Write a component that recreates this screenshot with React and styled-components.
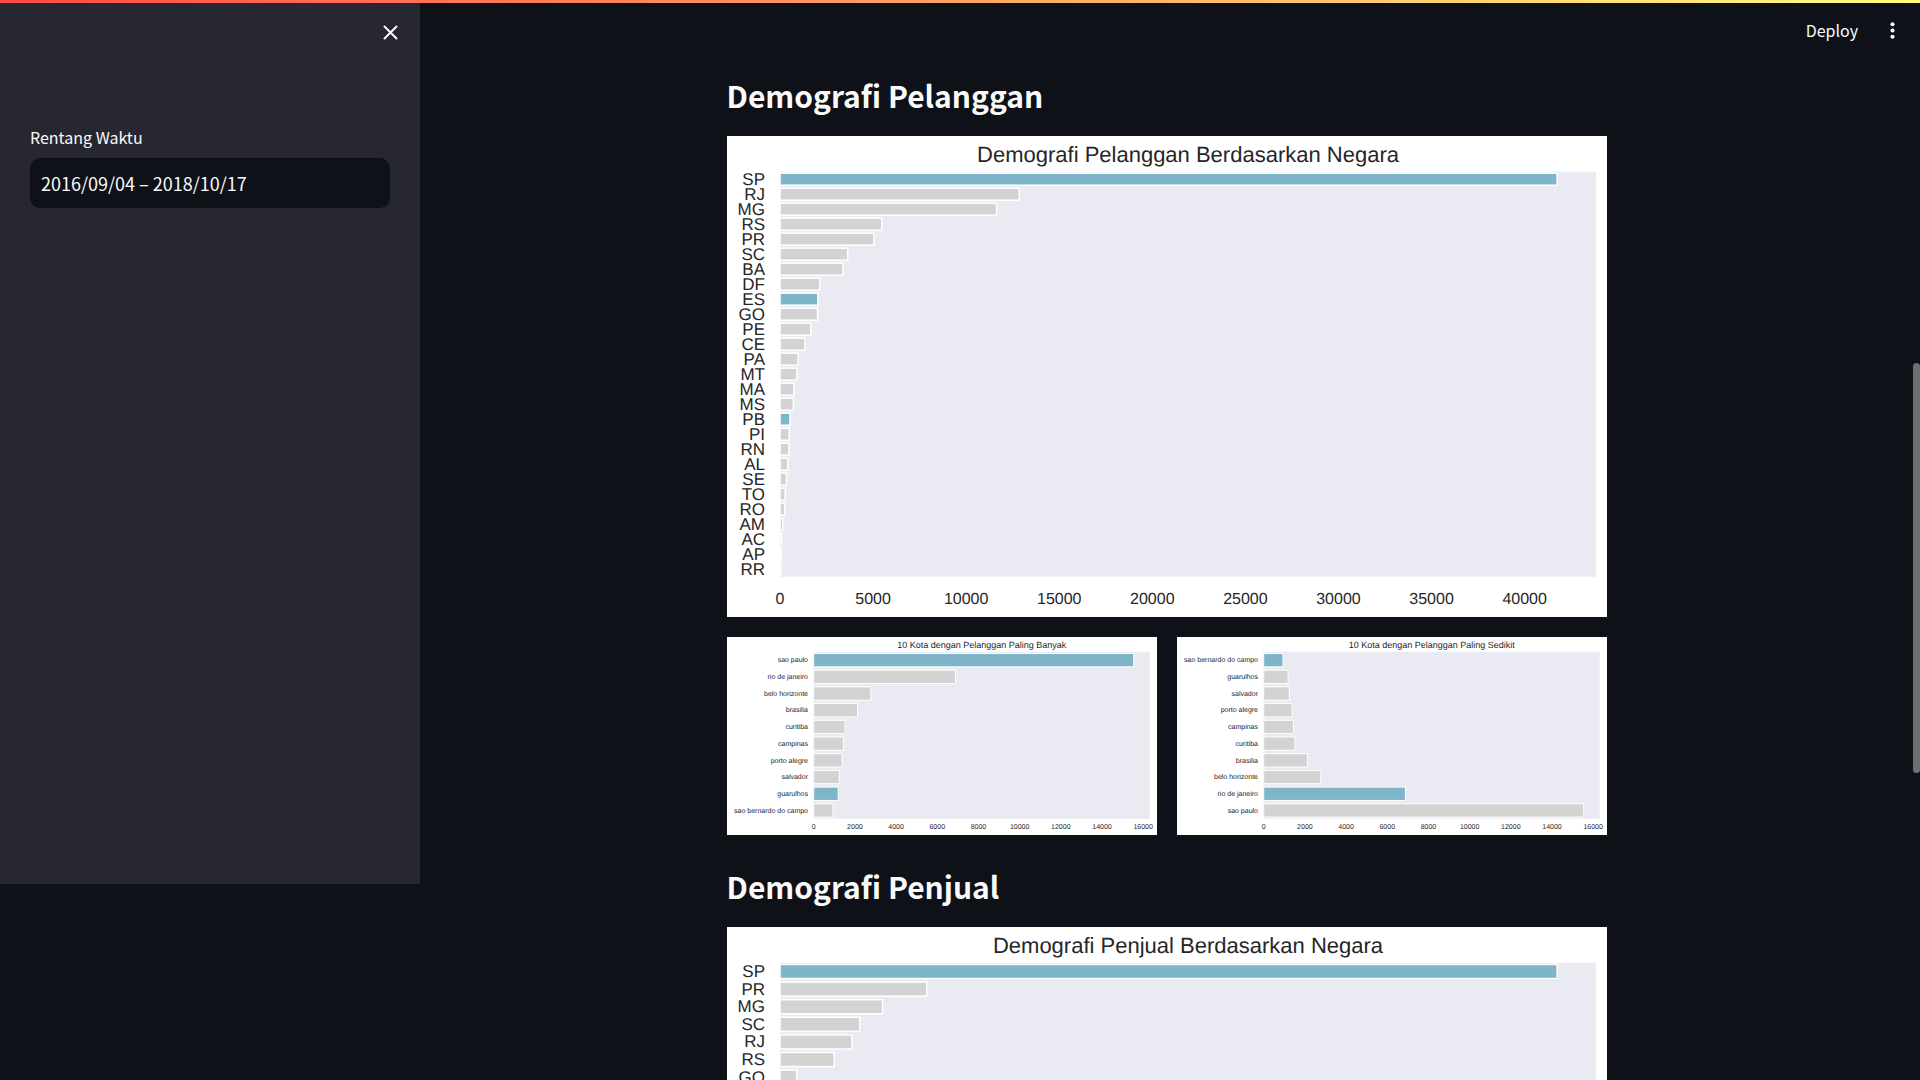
import React from "react";
import styled, { createGlobalStyle } from "styled-components";

const GlobalStyle = createGlobalStyle`
  *, *::before, *::after { box-sizing: border-box; }
  body {
    margin: 0;
    background: #0e1117;
    color: #fafafa;
    font-family: "Noto Sans CJK JP", "Noto Sans", sans-serif;
    font-size: 16px;
    overflow: hidden;
  }
`;

const Page = styled.div`
  display: flex;
  align-items: flex-start;
  height: 100vh;
  overflow: hidden;
`;

const Decoration = styled.div`
  position: fixed;
  top: 0;
  left: 0;
  right: 0;
  height: 3px;
  background: linear-gradient(90deg, #ff4b4b, #fffd80);
  z-index: 2;
`;

const Sidebar = styled.aside`
  flex: 0 0 420px;
  height: calc(100vh - 196px);
  padding: 16px 30px;
  background: #262730;
`;

const SidebarTop = styled.div`
  display: flex;
  justify-content: flex-end;
  margin: 0 -16px 75px 0;
`;

const IconButton = styled.button`
  display: flex;
  align-items: center;
  justify-content: center;
  width: 32px;
  height: 32px;
  padding: 0;
  border: 0;
  background: none;
  color: #fafafa;
  cursor: pointer;
`;

const Field = styled.div`
  display: flex;
  flex-direction: column;
  gap: 7px;
`;

const Label = styled.label`
  font-size: 16px;
  line-height: 28px;
`;

const DateInput = styled.input`
  width: 100%;
  height: 50px;
  padding: 0 11px 1px;
  border: 0;
  border-radius: 10px;
  background: #0e1117;
  color: #fafafa;
  font-family: inherit;
  font-size: 18px;
  outline: none;
`;

const Main = styled.main`
  flex: 1;
  min-width: 0;
`;

const Header = styled.header`
  display: flex;
  align-items: center;
  justify-content: flex-end;
  gap: 18px;
  height: 64px;
  padding: 0 5px 4px 0;
`;

const DeployButton = styled.button`
  padding: 0 0 1px;
  border: 0;
  background: none;
  color: #fafafa;
  font-family: inherit;
  font-size: 16px;
  line-height: 24px;
  cursor: pointer;
`;

const Content = styled.div`
  width: 100%;
  max-width: 880px;
  margin: 0 auto;
`;

const Section = styled.section`
  padding-bottom: 20px;
`;

const Heading = styled.h2`
  margin: 0;
  padding: 10px 0 20px;
  font-size: 30px;
  font-weight: 600;
  line-height: 42px;
`;

const ChartPair = styled.div`
  display: grid;
  grid-template-columns: 1fr 1fr;
  gap: 20px;
  margin-top: 20px;
`;

const ChartSvg = styled.svg`
  display: block;
  width: 100%;
  height: auto;
  background: #ffffff;
  font-family: "Liberation Sans", Arial, sans-serif;
  fill: #262626;
  text-rendering: geometricPrecision;
`;

const Rail = styled.div`
  display: grid;
  grid-template-rows: 363fr 410fr 307fr;
  flex: 0 0 7px;
  height: 100vh;
`;

const Thumb = styled.div`
  grid-row: 2;
  border-radius: 4px;
  background: #6e6f72;
`;

const LARGE = {
  width: 880, height: 481,
  left: 53, right: 869, top: 35.7, bottom: 440.7,
  labelX: 38, labelSize: 17, labelDrop: 5.5,
  titleSize: 22, titleY: 26,
  tickSize: 16, tickY: 467.5, stroke: 1.5,
};

const SMALL = {
  width: 430, height: 198,
  left: 86.7, right: 422.7, top: 14.8, bottom: 181.8,
  labelX: 81, labelSize: 7, labelDrop: 2.2,
  titleSize: 9, titleY: 11,
  tickSize: 7, tickY: 192, stroke: 1,
};

const BLUE = "#7fb5c8";
const GREY = "#d3d3d3";

function BarChart({ id, title, data, highlights, tickStep, tickMax, layout: l }) {
  const max = Math.max(...data.map((d) => d[1])) * 1.05;
  const scale = (l.right - l.left) / max;
  const pitch = (l.bottom - l.top) / data.length;
  const ticks = [];
  for (let t = 0; t <= tickMax; t += tickStep) ticks.push(t);
  return (
    <ChartSvg viewBox={`0 0 ${l.width} ${l.height}`} role="img" aria-label={title}>
      <clipPath id={id}>
        <rect x={l.left} y={l.top} width={l.right - l.left} height={l.bottom - l.top} />
      </clipPath>
      <text x={(l.left + l.right) / 2} y={l.titleY} fontSize={l.titleSize} textAnchor="middle">
        {title}
      </text>
      <rect x={l.left} y={l.top} width={l.right - l.left} height={l.bottom - l.top} fill="#eaeaf2" />
      <g clipPath={`url(#${id})`} stroke="#ffffff" strokeWidth={l.stroke}>
        {data.map(([name, value], i) => (
          <rect
            key={name}
            x={l.left}
            y={l.top + pitch * (i + 0.1)}
            width={value * scale}
            height={pitch * 0.8}
            fill={highlights.includes(name) ? BLUE : GREY}
          />
        ))}
      </g>
      <g fontSize={l.labelSize} textAnchor="end">
        {data.map(([name], i) => (
          <text key={name} x={l.labelX} y={l.top + pitch * (i + 0.5) + l.labelDrop}>
            {name}
          </text>
        ))}
      </g>
      <g fontSize={l.tickSize} textAnchor="middle">
        {ticks.map((t) => (
          <text key={t} x={l.left + t * scale} y={l.tickY}>
            {t}
          </text>
        ))}
      </g>
    </ChartSvg>
  );
}

const customerStates = [
  ["SP", 41746], ["RJ", 12852], ["MG", 11635], ["RS", 5466], ["PR", 5045],
  ["SC", 3637], ["BA", 3380], ["DF", 2140], ["ES", 2033], ["GO", 2020],
  ["PE", 1652], ["CE", 1336], ["PA", 975], ["MT", 907], ["MA", 747],
  ["MS", 715], ["PB", 536], ["PI", 495], ["RN", 485], ["AL", 413],
  ["SE", 350], ["TO", 280], ["RO", 253], ["AM", 148], ["AC", 81],
  ["AP", 68], ["RR", 46],
];

const customerCities = [
  ["sao paulo", 15540], ["rio de janeiro", 6882], ["belo horizonte", 2773],
  ["brasilia", 2131], ["curitiba", 1521], ["campinas", 1444],
  ["porto alegre", 1379], ["salvador", 1245], ["guarulhos", 1189],
  ["sao bernardo do campo", 938],
];

const sellerStates = [
  ["SP", 1849], ["PR", 349], ["MG", 244], ["SC", 190], ["RJ", 171],
  ["RS", 129], ["GO", 40], ["DF", 30], ["ES", 23], ["BA", 19],
  ["CE", 13], ["PE", 9], ["PB", 6], ["RN", 5], ["MS", 5], ["MT", 4],
  ["RO", 2], ["SE", 2], ["PI", 1], ["AC", 1], ["MA", 1], ["AM", 1], ["PA", 1],
];

export default function App() {
  return (
    <>
      <GlobalStyle />
      <Decoration />
      <Page>
        <Sidebar>
          <SidebarTop>
            <IconButton type="button" aria-label="Close sidebar">
              <svg width="17" height="17" viewBox="0 0 17 17" fill="none" stroke="currentColor" strokeWidth="2" strokeLinecap="round">
                <path d="M2.5 2.5l12 12M14.5 2.5l-12 12" />
              </svg>
            </IconButton>
          </SidebarTop>
          <Field>
            <Label htmlFor="date-range">Rentang Waktu</Label>
            <DateInput id="date-range" type="text" defaultValue="2016/09/04 – 2018/10/17" />
          </Field>
        </Sidebar>
        <Main>
          <Header>
            <DeployButton type="button">Deploy</DeployButton>
            <IconButton type="button" aria-label="Menu">
              <svg width="25" height="25" viewBox="0 0 24 24" fill="currentColor">
                <circle cx="12" cy="6" r="2" />
                <circle cx="12" cy="12" r="2" />
                <circle cx="12" cy="18" r="2" />
              </svg>
            </IconButton>
          </Header>
          <Content>
            <Section>
              <Heading>Demografi Pelanggan</Heading>
              <BarChart
                id="customer-states"
                title="Demografi Pelanggan Berdasarkan Negara"
                data={customerStates}
                highlights={["SP", "ES", "PB"]}
                tickStep={5000}
                tickMax={40000}
                layout={LARGE}
              />
              <ChartPair>
                <BarChart
                  id="top-cities"
                  title="10 Kota dengan Pelanggan Paling Banyak"
                  data={customerCities}
                  highlights={["sao paulo", "guarulhos"]}
                  tickStep={2000}
                  tickMax={16000}
                  layout={SMALL}
                />
                <BarChart
                  id="bottom-cities"
                  title="10 Kota dengan Pelanggan Paling Sedikit"
                  data={[...customerCities].reverse()}
                  highlights={["sao bernardo do campo", "rio de janeiro"]}
                  tickStep={2000}
                  tickMax={16000}
                  layout={SMALL}
                />
              </ChartPair>
            </Section>
            <Section>
              <Heading>Demografi Penjual</Heading>
              <BarChart
                id="seller-states"
                title="Demografi Penjual Berdasarkan Negara"
                data={sellerStates}
                highlights={["SP"]}
                tickStep={250}
                tickMax={1750}
                layout={LARGE}
              />
            </Section>
          </Content>
        </Main>
        <Rail>
          <Thumb />
        </Rail>
      </Page>
    </>
  );
}
